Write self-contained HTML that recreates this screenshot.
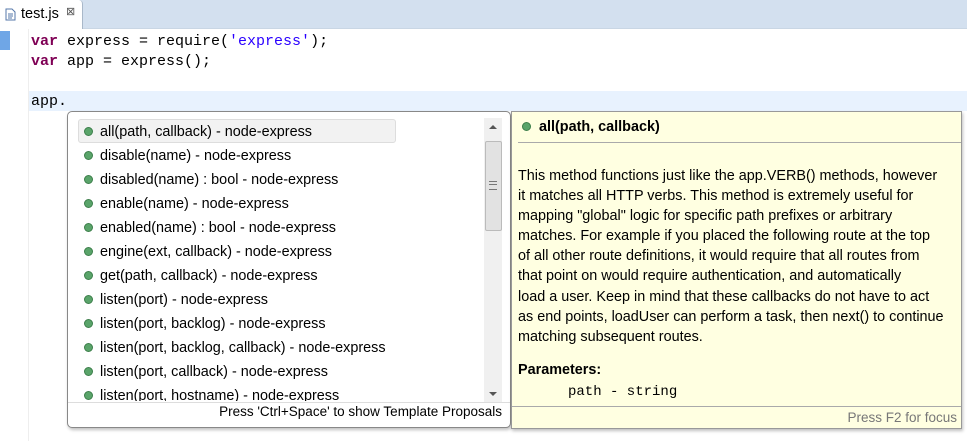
<!DOCTYPE html>
<html><head><style>
body{margin:0;width:967px;height:441px;overflow:hidden;background:#fff;position:relative;font-family:"Liberation Sans",sans-serif;}
.tabbar{position:absolute;left:0;top:0;width:967px;height:28px;background:#d3e0ef;border-bottom:1px solid #c9d6e4;}
.tab{position:absolute;left:0;top:0;width:82px;height:29px;background:#fff;border-right:1px solid #a9b8c9;border-top-right-radius:4px;font-size:14.5px;}
.code{position:absolute;left:31px;font-family:"Liberation Mono",monospace;font-size:15px;color:#000;white-space:pre;line-height:20px}
.kw{color:#7f0055;font-weight:bold}.str{color:#2a00ff}
.popup{position:absolute;left:67px;top:111px;width:442px;height:315px;border:1px solid #888;border-radius:5px;background:#fff;box-shadow:1px 2px 3px rgba(0,0,0,.25);}
.row{position:absolute;left:12px;height:22px;font-size:14.4px;line-height:22px;color:#000;white-space:nowrap}
.dot{display:inline-block;width:7px;height:7px;border-radius:50%;background:#5aa46a;border:1px solid #3d7f4b;margin:0 7px 1px 4px;vertical-align:middle}
.doc{position:absolute;left:511px;top:111px;width:449px;height:316px;background:#ffffe1;border:1px solid #999;box-shadow:1px 2px 3px rgba(0,0,0,.25);font-size:14.4px;color:#000}
</style></head><body>
<div class="tabbar"><div class="tab">
<svg style="position:absolute;left:5px;top:8px" width="11" height="13"><path d="M1 1h6l3 3v8H1z" fill="#fff" stroke="#5577aa"/><path d="M3 6h5M3 8h5M3 10h4" stroke="#5577aa"/></svg>
<span style="position:absolute;left:21px;top:6px">test.js</span>
<span style="position:absolute;left:66px;top:5px;font-size:11px;color:#555">⊠</span></div></div>
<div style="position:absolute;left:0;top:31px;width:10px;height:19px;background:#6fa6e6"></div>
<div style="position:absolute;left:28px;top:29px;width:1px;height:412px;background:#eee"></div>
<div style="position:absolute;left:29px;top:91px;width:938px;height:20px;background:#e8f2fe"></div>
<div class="code" style="top:32px"><span class="kw">var</span> express = require(<span class="str">'express'</span>);</div>
<div class="code" style="top:52px"><span class="kw">var</span> app = express();</div>
<div class="code" style="top:92px">app.</div>
<div class="popup">
<div style="position:absolute;left:10px;top:7px;width:316px;height:22px;background:#f2f2f2;border:1px solid #ddd;border-radius:3px"></div>
<div class="row" style="top:9px"><span class="dot"></span>all(path, callback) - node-express</div>
<div class="row" style="top:33px"><span class="dot"></span>disable(name) - node-express</div>
<div class="row" style="top:57px"><span class="dot"></span>disabled(name) : bool - node-express</div>
<div class="row" style="top:81px"><span class="dot"></span>enable(name) - node-express</div>
<div class="row" style="top:105px"><span class="dot"></span>enabled(name) : bool - node-express</div>
<div class="row" style="top:129px"><span class="dot"></span>engine(ext, callback) - node-express</div>
<div class="row" style="top:153px"><span class="dot"></span>get(path, callback) - node-express</div>
<div class="row" style="top:177px"><span class="dot"></span>listen(port) - node-express</div>
<div class="row" style="top:201px"><span class="dot"></span>listen(port, backlog) - node-express</div>
<div class="row" style="top:225px"><span class="dot"></span>listen(port, backlog, callback) - node-express</div>
<div class="row" style="top:249px"><span class="dot"></span>listen(port, callback) - node-express</div>
<div class="row" style="top:273px;height:16px;overflow:hidden"><span class="dot"></span>listen(port, hostname) - node-express</div>
<div style="position:absolute;left:416px;top:6px;width:18px;height:284px;background:#f0f0f0"></div>
<div style="position:absolute;left:421px;top:13px;border:4px solid transparent;border-bottom:4px solid #555;border-top:0"></div>
<div style="position:absolute;left:421px;top:280px;border:4px solid transparent;border-top:4px solid #555;border-bottom:0"></div>
<div style="position:absolute;left:417px;top:29px;width:15px;height:88px;background:#e2e2e2;border:1px solid #bbb;border-radius:2px"></div>
<div style="position:absolute;left:421px;top:69px;width:8px;height:7px;border-top:1px solid #777;border-bottom:1px solid #777"><div style="margin-top:2px;height:1px;background:#777"></div></div>
<div style="position:absolute;left:0;top:290px;width:442px;height:1px;background:#ddd"></div>
<div style="position:absolute;right:8px;top:292px;font-size:13.5px;color:#000">Press 'Ctrl+Space' to show Template Proposals</div>
</div>
<div class="doc">
<div style="position:absolute;left:8px;top:7px;font-weight:bold;white-space:nowrap"><span class="dot" style="margin:0 8px 2px 2px"></span>all(path, callback)</div>
<div style="position:absolute;left:6px;top:30px;width:443px;height:1px;background:#aaa"></div>
<div style="position:absolute;left:6px;top:54px;width:440px;line-height:20.1px;white-space:nowrap">This method functions just like the app.VERB() methods, however<br>it matches all HTTP verbs. This method is extremely useful for<br>mapping "global" logic for specific path prefixes or arbitrary<br>matches. For example if you placed the following route at the top<br>of all other route definitions, it would require that all routes from<br>that point on would require authentication, and automatically<br>load a user. Keep in mind that these callbacks do not have to act<br>as end points, loadUser can perform a task, then next() to continue<br>matching subsequent routes.</div>
<div style="position:absolute;left:6px;top:250px;font-weight:bold">Parameters:</div>
<div style="position:absolute;left:56px;top:272px;font-family:'Liberation Mono',monospace;font-size:14px">path - string</div>
<div style="position:absolute;left:0;top:294px;width:449px;height:1px;background:#aaa"></div>
<div style="position:absolute;right:4px;top:298px;font-size:13.5px;color:#777">Press F2 for focus</div>
</div>
</body></html>
